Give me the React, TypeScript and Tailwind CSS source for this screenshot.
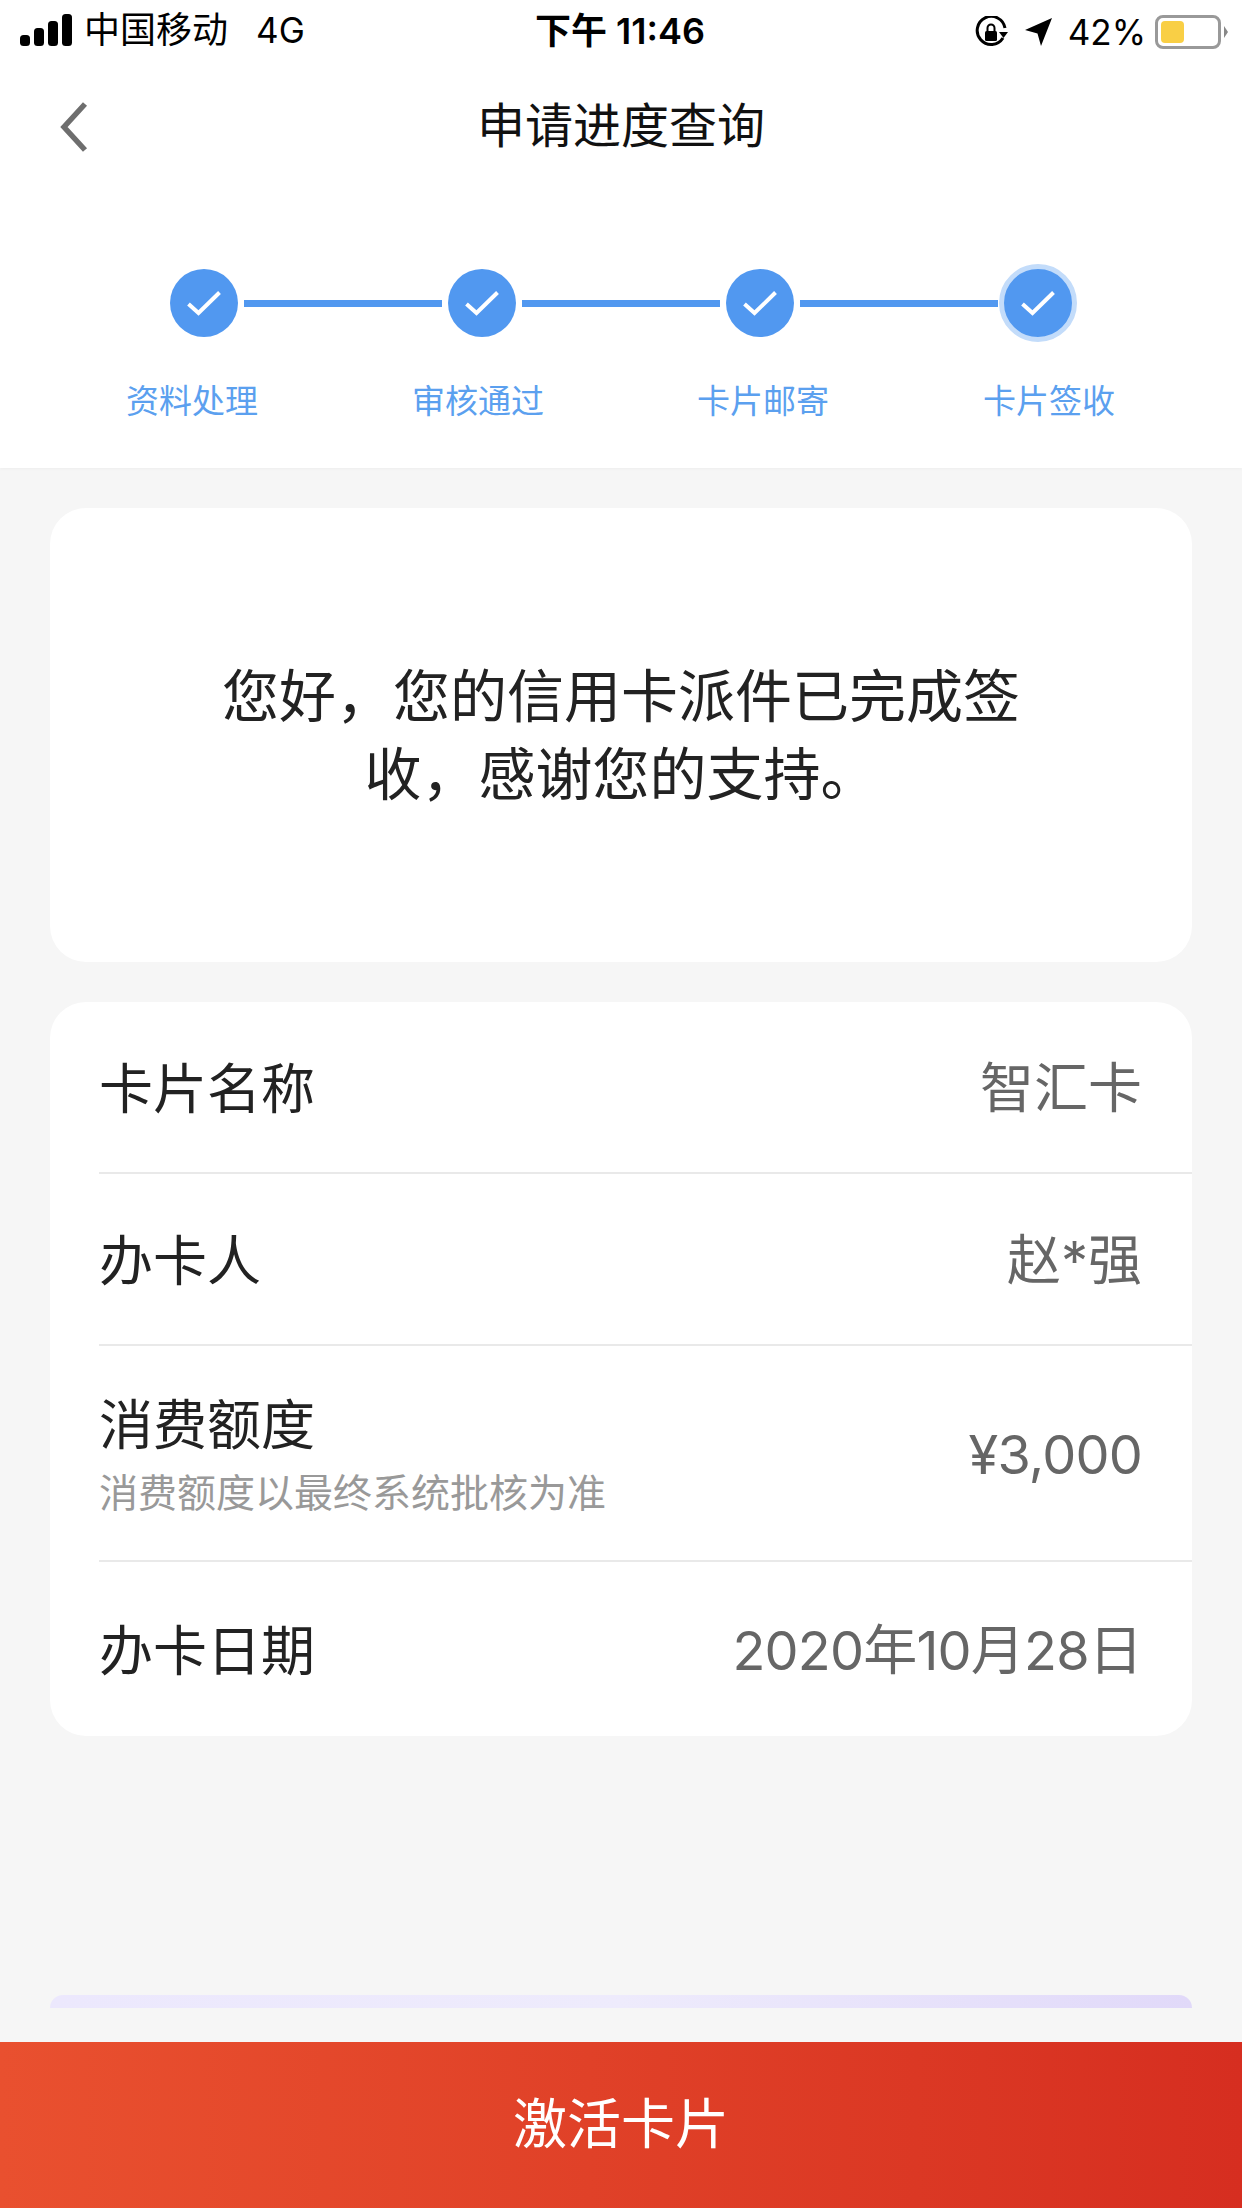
import React from "react";

const font = { fontFamily: 'Inter, "Noto Sans CJK SC", sans-serif' };

function Check() {
  return (
    <svg width="36" height="28" viewBox="0 0 36 28" fill="none">
      <path d="M2.5 15 L12.5 24 L33.5 3.5" stroke="#fff" strokeWidth="4" strokeLinejoin="miter" />
    </svg>
  );
}

function Step({ last }: { last?: boolean }) {
  return (
    <div
      className={
        last
          ? "w-[78px] h-[78px] -mx-[5px] shrink-0 rounded-full bg-[#5198f0] border-[5px] border-[#c3dcfa] flex items-center justify-center"
          : "w-[68px] h-[68px] shrink-0 rounded-full bg-[#5198f0] flex items-center justify-center"
      }
    >
      <Check />
    </div>
  );
}

function Line() {
  return <div className="w-[198px] h-[7px] bg-[#5198f0] mx-[6px] shrink-0" />;
}

function Row({
  label,
  value,
  sub,
  h,
  numeric,
  border = true,
}: {
  label: string;
  value: string;
  sub?: string;
  h: string;
  numeric?: boolean;
  border?: boolean;
}) {
  return (
    <div className={`${h} ml-[49px] flex items-center justify-between pr-[50px] ${border ? "border-b-2 border-[#e9e9e9]" : ""}`}>
      <div className="flex flex-col mt-[5px]">
        <span className="text-[54px] leading-[64px] text-[#222]">{label}</span>
        {sub && <span className="text-[39px] leading-[50px] text-[#999] mt-[10px]">{sub}</span>}
      </div>
      <span className={`text-[54px] leading-[64px] text-[#666] mt-[4px] ${numeric ? "tracking-[-0.8px]" : ""}`}>{value}</span>
    </div>
  );
}

export default function App() {
  return (
    <div style={font} className="w-[1242px] h-[2208px] bg-[#f6f6f6] flex flex-col overflow-hidden">
      <div className="bg-white h-[468px] shrink-0 shadow-[0_1px_3px_rgba(0,0,0,0.04)]">
        <div className="h-[60px] flex items-center justify-between pl-[20px] pr-[14px] text-black relative">
          <div className="flex items-center">
            <svg width="52" height="32" viewBox="0 0 52 32" fill="black">
              <rect x="0" y="21" width="10" height="11" rx="3.5" />
              <rect x="14" y="14" width="10" height="18" rx="3.5" />
              <rect x="28" y="7" width="10" height="25" rx="3.5" />
              <rect x="42" y="0" width="10" height="32" rx="3.5" />
            </svg>
            <span className="ml-[12px] text-[36px] leading-[44px]">中国移动</span>
            <span className="ml-[28px] text-[35px] leading-[44px]">4G</span>
          </div>
          <div className="absolute left-[535px] top-[6px] text-[36px] leading-[50px] font-semibold">下午 11:46</div>
          <div className="flex items-center pt-[3px]">
            <svg width="34" height="34" viewBox="0 0 34 34" fill="none" className="mr-[15px] mt-[3px]">
              <path d="M28 22 A14 14 0 1 1 30 12" stroke="black" strokeWidth="3" />
              <path d="M24 16 L33 16 L28.5 22 Z" fill="black" />
              <rect x="10" y="15" width="12" height="10" rx="1.5" fill="black" />
              <path d="M12.5 15 V12 a3.5 3.5 0 0 1 7 0 V15" stroke="black" strokeWidth="2" />
            </svg>
            <svg width="30" height="30" viewBox="0 0 30 30" fill="black" className="mr-[14px]">
              <path d="M28 1 L17 29 L13.5 16.5 L1 13 Z" />
            </svg>
            <span className="text-[35px] leading-[44px] mr-[9px]">42%</span>
            <div className="w-[66px] h-[34px] rounded-[8px] border-[3px] border-[#999] p-[3px] flex">
              <div className="w-[23px] h-full rounded-[4px] bg-[#f9cf45]" />
            </div>
            <div className="w-0 h-0 ml-[3px] border-y-[6px] border-y-transparent border-l-[4px] border-l-[#888]" />
          </div>
        </div>

        <div className="h-[130px] relative flex items-center justify-center">
          <svg width="28" height="50" viewBox="0 0 28 50" fill="none" className="absolute left-[60px] top-[42px]">
            <path d="M25 2 L4 25 L25 48" stroke="#6e6e6e" strokeWidth="5.5" />
          </svg>
          <span className="text-[48px] leading-[60px] text-[#111] mt-[2px]">申请进度查询</span>
        </div>

        <div className="flex items-center h-[78px] pl-[170px] mt-[74px]">
          <Step />
          <Line />
          <Step />
          <Line />
          <Step />
          <Line />
          <Step last />
        </div>

        <div className="grid grid-cols-4 w-[1140px] ml-[51px] mt-[36px] text-[33px] leading-[46px] text-[#5ba0ef]">
          <span className="w-[284px] text-left pl-[75px]">资料处理</span>
          <span className="w-[284px] text-left pl-[76px]">审核通过</span>
          <span className="w-[284px] text-left pl-[76px]">卡片邮寄</span>
          <span className="w-[284px] text-left pl-[77px]">卡片签收</span>
        </div>
      </div>

      <div className="mx-[50px] mt-[40px] h-[454px] rounded-[36px] bg-white flex items-center justify-center shrink-0">
        <p className="w-[810px] text-center text-[57px] leading-[78px] text-[#222] mt-[2px]">
          {"您好\uFF0C您的信用卡派件已完成签收\uFF0C感谢您的支持。"}
        </p>
      </div>

      <div className="mx-[50px] mt-[40px] h-[734px] rounded-[36px] bg-white shrink-0 overflow-hidden">
        <Row label="卡片名称" value="智汇卡" h="h-[172px]" />
        <Row label="办卡人" value="赵*强" h="h-[172px]" />
        <Row label="消费额度" sub="消费额度以最终系统批核为准" value="¥3,000" h="h-[216px]" numeric />
        <Row label="办卡日期" value="2020年10月28日" h="h-[174px]" numeric border={false} />
      </div>

      <div className="mx-[50px] mt-[259px] h-[13px] rounded-t-[26px] shrink-0 bg-gradient-to-r from-[#ece8fd] via-[#eeebfc] to-[#e1d9f9]" />

      <div className="mt-[34px] h-[166px] shrink-0 bg-gradient-to-r from-[#e9502f] to-[#d62e20] flex items-center justify-center">
        <span className="text-[54px] leading-[64px] text-white">激活卡片</span>
      </div>
    </div>
  );
}
